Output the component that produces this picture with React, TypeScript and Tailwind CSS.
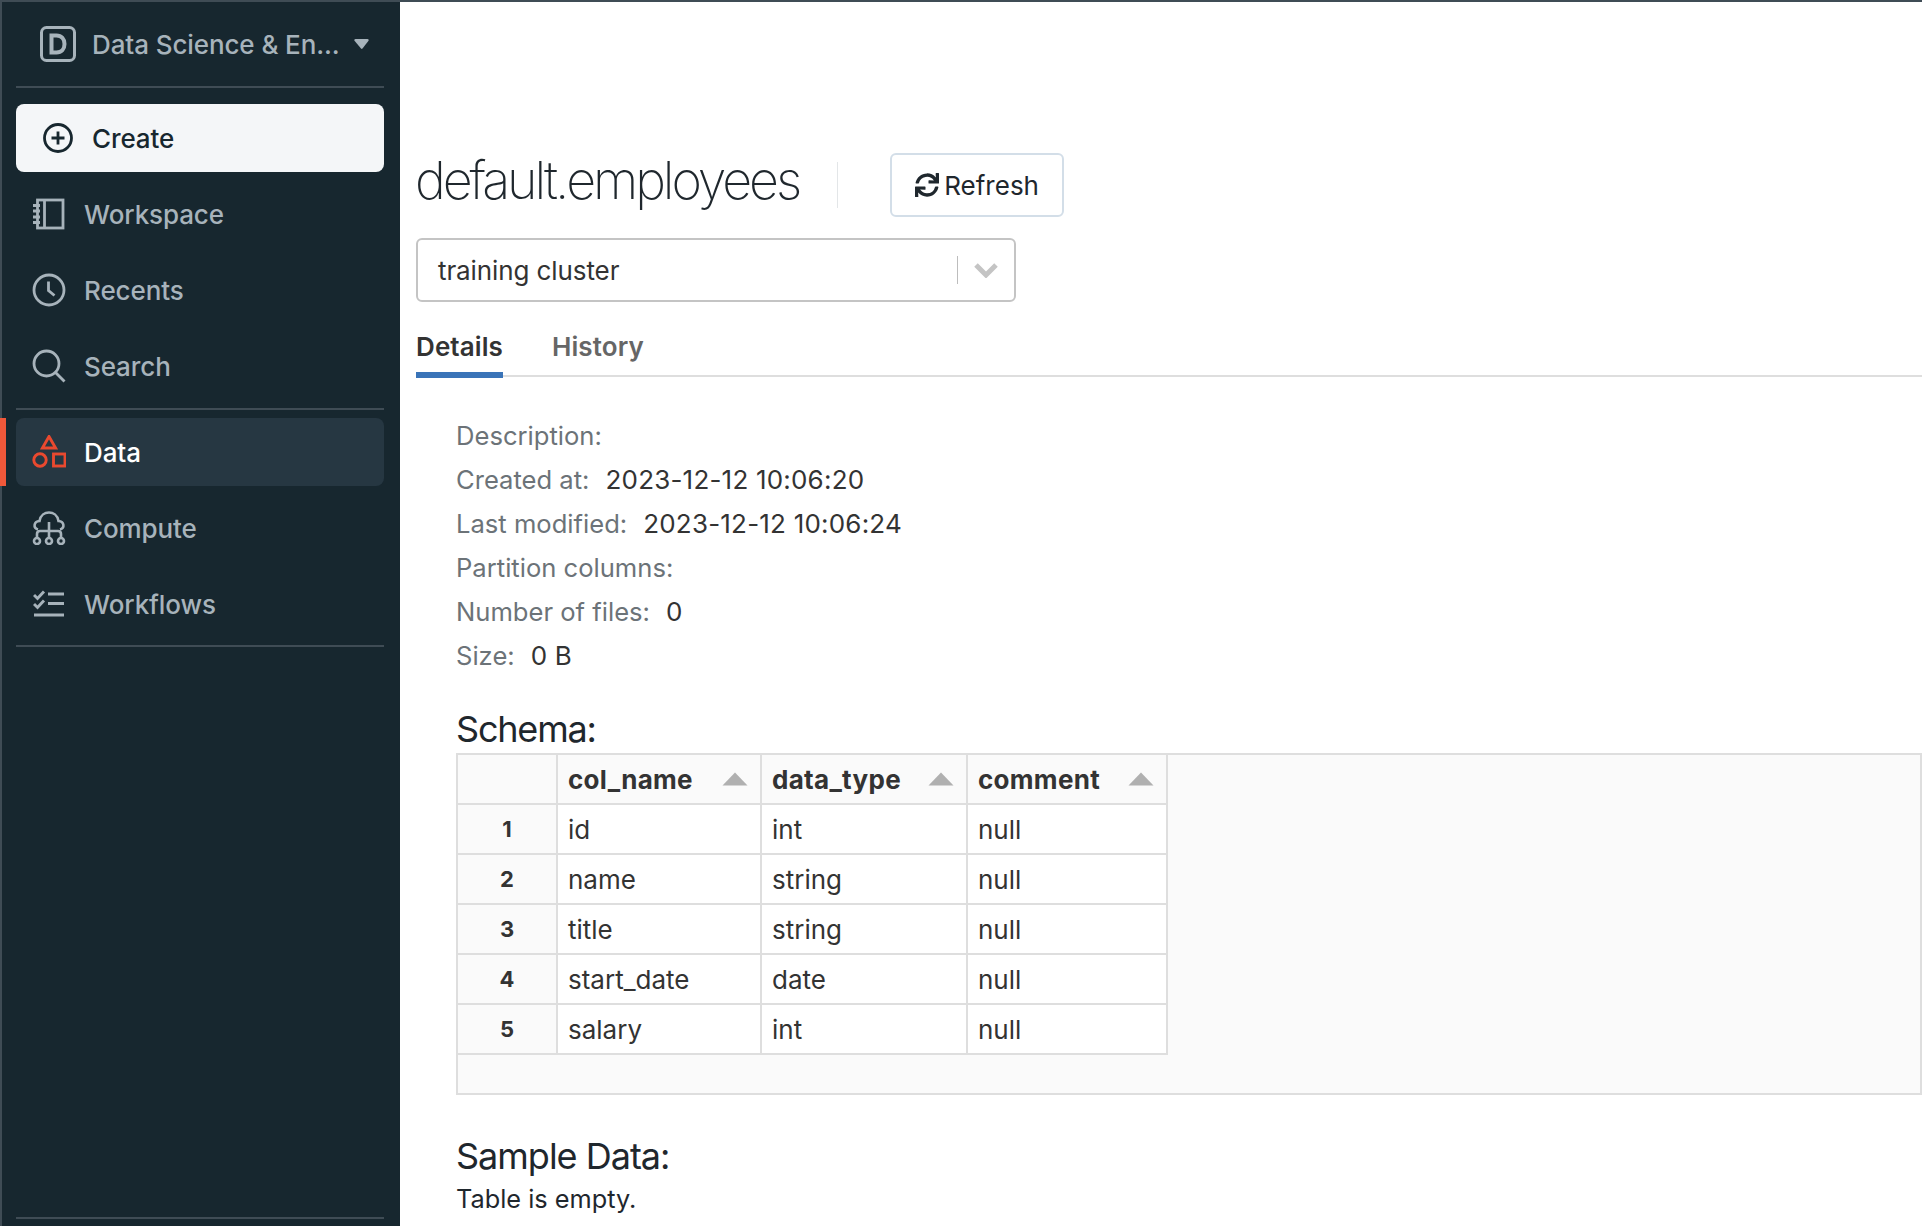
import React from "react";
import { FaSync } from "react-icons/fa";

const schemaRows = [
  { n: 1, col: "id", type: "int" },
  { n: 2, col: "name", type: "string" },
  { n: 3, col: "title", type: "string" },
  { n: 4, col: "start_date", type: "date" },
  { n: 5, col: "salary", type: "int" },
];

const details = [
  { label: "Description:", value: "" },
  { label: "Created at:", value: "2023-12-12 10:06:20" },
  { label: "Last modified:", value: "2023-12-12 10:06:24" },
  { label: "Partition columns:", value: "" },
  { label: "Number of files:", value: "0" },
  { label: "Size:", value: "0 B" },
];

function WorkspaceIcon() {
  return (
    <svg width="32" height="32" viewBox="0 0 32 32" fill="none" stroke="currentColor" strokeWidth="2.8">
      <rect x="4.500" y="2" width="25.500" height="28" />
      <path d="M11.500 2v28" />
      <path d="M0 7.500h7M0 13h7M0 19h7M0 24.500h7" />
    </svg>
  );
}

function ClockIcon() {
  return (
    <svg width="34" height="34" viewBox="0 0 34 34" fill="none" stroke="currentColor" strokeWidth="2.800">
      <circle cx="17" cy="17" r="15" />
      <path d="M16.500 8.500v9l6 5" />
    </svg>
  );
}

function SearchIcon() {
  return (
    <svg width="34" height="34" viewBox="0 0 34 34" fill="none" stroke="currentColor" strokeWidth="2.800">
      <circle cx="14.500" cy="14.500" r="12.500" />
      <path d="M23.500 23.500l9 9" />
    </svg>
  );
}

function DataIcon() {
  return (
    <svg width="34" height="34" viewBox="0 1 34 34" fill="none" stroke="#e9492f" strokeWidth="2.900">
      <path d="M17 2.500l6.600 11.500H10.400z" />
      <circle cx="8" cy="26" r="6.200" />
      <rect x="21.500" y="20" width="11.500" height="12" />
    </svg>
  );
}

function ComputeIcon() {
  return (
    <svg width="34" height="34" viewBox="0 0 34 34" fill="none" stroke="currentColor" strokeWidth="2.600">
      <path d="M6 18.500c-5-1.500-4.500-8 1.500-8.500C8.500 4 13 1.500 17 1.500S25.500 4 26.500 10c6 .5 6.500 7 1.500 8.500" />
      <path d="M17 11v16M5 27v-4c0-2 1-3 3-3h18c2 0 3 1 3 3v4" />
      <circle cx="5" cy="30" r="3" />
      <circle cx="17" cy="30" r="3" />
      <circle cx="29" cy="30" r="3" />
    </svg>
  );
}

function WorkflowsIcon() {
  return (
    <svg width="32" height="30" viewBox="0 0 32 30" fill="none" stroke="currentColor" strokeWidth="2.900">
      <path d="M1 6l3.500 3.500L11 2.500M1 15l3.500 3.500L11 11.500" />
      <path d="M15 5h16M15 14.500h16M1 26h30" />
    </svg>
  );
}

function SortArrow() {
  return (
    <svg width="26" height="14" viewBox="0 0 26 14" className="shrink-0">
      <path d="M13 0.500L25.500 13.500H0.500z" fill="#b0b0b0" />
    </svg>
  );
}

function NavItem({ icon, label, active }: { icon: React.ReactNode; label: string; active?: boolean }) {
  return (
    <div
      className={
        "relative flex h-[68px] items-center rounded-lg pl-[16px] " +
        (active ? "bg-[#263742] text-white" : "text-[#a7b3bb]")
      }
    >
      <div className="flex w-[34px] justify-center">{icon}</div>
      <span className="ml-[18px]">{label}</span>
    </div>
  );
}

export default function App() {
  return (
    <div className="flex h-[1226px] w-[1922px] overflow-hidden bg-white font-['Inter',sans-serif]">
      {/* Sidebar */}
      <aside className="flex w-[400px] shrink-0 flex-col border-l-2 border-t-2 border-[#3f4c55] bg-[#17272f] pl-[14px] pr-[16px] text-[26px] font-[450] tracking-[-0.1px]">
        <div className="flex h-[86px] items-center border-b-2 border-[#3f4c55] pl-[24px] text-[#a7b3bb]">
          <svg width="36" height="36" viewBox="0 0 36 36" fill="none" className="shrink-0">
            <rect x="1.500" y="1.500" width="33" height="33" rx="5" stroke="currentColor" strokeWidth="3" />
            <path d="M11.500 9.500v17h5c5 0 8-3.500 8-8.500s-3-8.500-8-8.500z" stroke="currentColor" strokeWidth="4" />
          </svg>
          <span className="ml-[16px] whitespace-nowrap">Data Science &amp; En...</span>
          <svg width="15" height="10" viewBox="0 0 15 10" className="ml-[14px] shrink-0">
            <path d="M1.500 0h12c1 0 1.500 1 1 1.700L8.500 9.500c-.5.5-1 .5-1.500 0L.5 1.700C0 1 .5 0 1.500 0z" fill="currentColor" />
          </svg>
        </div>

        <div className="mt-[16px] flex h-[68px] items-center rounded-lg bg-[#f4f6f8] pl-[27px] text-[#17272f]">
          <svg width="30" height="30" viewBox="0 0 30 30" fill="none" stroke="currentColor" strokeWidth="2.800">
            <circle cx="15" cy="15" r="13.500" />
            <path d="M15 8.500v13M8.500 15h13" />
          </svg>
          <span className="ml-[19px]">Create</span>
        </div>

        <div className="mt-[8px] flex flex-col gap-[8px] border-b-2 border-[#3f4c55] pb-[8px]">
          <NavItem icon={<WorkspaceIcon />} label="Workspace" />
          <NavItem icon={<ClockIcon />} label="Recents" />
          <NavItem icon={<SearchIcon />} label="Search" />
        </div>

        <div className="relative mt-[8px] flex flex-col gap-[8px] border-b-2 border-[#3f4c55] pb-[7px]">
          <div className="absolute left-[-16px] top-0 h-[68px] w-[6px] bg-[#f0583a]" />
          <NavItem icon={<DataIcon />} label="Data" active />
          <NavItem icon={<ComputeIcon />} label="Compute" />
          <NavItem icon={<WorkflowsIcon />} label="Workflows" />
        </div>

        <div className="mt-auto mb-[7px] border-b-2 border-[#3f4c55]" />
      </aside>

      {/* Main */}
      <main className="min-w-0 flex-1 border-t-2 border-[#3f4c55] pl-[16px] text-[#333]">
        <div className="mt-[151px] flex h-[64px] items-center">
          <h1 className="ml-[-1px] pb-[8px] text-[52px] font-extralight tracking-[-3.100px] text-[#1f272d]">default.employees</h1>
          <div className="ml-[38px] h-[46px] w-px bg-[#e3e6e8]" />
          <button className="ml-[52px] flex h-[64px] w-[174px] items-center justify-center gap-[5px] rounded-md border-2 border-[#d3dee8] text-[26px] text-[#1f272d]">
            <FaSync className="h-[24px] w-[24px]" />
            Refresh
          </button>
        </div>

        <div className="mt-[21px] flex h-[64px] w-[600px] items-center rounded-md border-2 border-[#c4c4c4] pl-[20px] text-[26px] tracking-[-0.1px]">
          <span className="flex-1">training cluster</span>
          <div className="h-[28px] w-px bg-[#bdbdbd]" />
          <svg width="24" height="16" viewBox="0 0 24 16" fill="none" stroke="#c4c4c4" strokeWidth="5" className="mx-[16px]">
            <path d="M2 3l10 10L22 3" />
          </svg>
        </div>

        <div className="mt-[22px] flex h-[53px] gap-[49px] border-b-2 border-[#dedede] pt-[3px] text-[26px] font-semibold tracking-[0.1px]">
          <div className="h-[51px] border-b-[6px] border-[#3a74b8] text-[#333]">Details</div>
          <div className="text-[#666]">History</div>
        </div>

        <div className="pl-[40px]">
          <div className="mt-[37px] flex flex-col text-[25.600px] leading-[44px]">
            {details.map((d) => (
              <div key={d.label} className="flex gap-[16px]">
                <span className="text-[#6c7378]">{d.label}</span>
                {d.value && <span className="text-[26px] tracking-[0.2px] text-[#333]">{d.value}</span>}
              </div>
            ))}
          </div>

          <h2 className="mt-[27px] text-[36px] font-normal leading-[48px] tracking-[-1.200px] text-[#1f272d]">Schema:</h2>

          {/* Schema table */}
          <div className="border-2 border-[#dedede] bg-[#fafafa] pb-[38px] text-[26px]">
            <div className="grid w-[710px] grid-cols-[100px_204px_206px_200px] bg-white">
              <div className="h-[50px] border-b-2 border-r-2 border-[#dedede] bg-[#fafafa]" />
              {["col_name", "data_type", "comment"].map((h) => (
                <div key={h} className="flex h-[50px] items-center justify-between border-b-2 border-r-2 border-[#dedede] bg-[#fafafa] pl-[10px] pr-[12px] font-bold tracking-[0.3px] text-[#333]">
                  {h}
                  <SortArrow />
                </div>
              ))}
              {schemaRows.map((r) => (
                <React.Fragment key={r.n}>
                  <div className="flex h-[50px] items-center justify-center border-b-2 border-r-2 border-[#dedede] bg-[#fafafa] text-[22px] font-bold">
                    {r.n}
                  </div>
                  <div className="flex h-[50px] items-center border-b-2 border-r-2 border-[#dedede] pl-[10px]">{r.col}</div>
                  <div className="flex h-[50px] items-center border-b-2 border-r-2 border-[#dedede] pl-[10px]">{r.type}</div>
                  <div className="flex h-[50px] items-center border-b-2 border-r-2 border-[#dedede] pl-[10px]">null</div>
                </React.Fragment>
              ))}
            </div>
          </div>

          <h2 className="mt-[37px] text-[36px] font-normal leading-[48px] tracking-[-1px] text-[#1f272d]">Sample Data:</h2>
          <p className="mt-[1px] text-[25.300px] leading-[36px] text-[#1f272d]">Table is empty.</p>
        </div>
      </main>
    </div>
  );
}
